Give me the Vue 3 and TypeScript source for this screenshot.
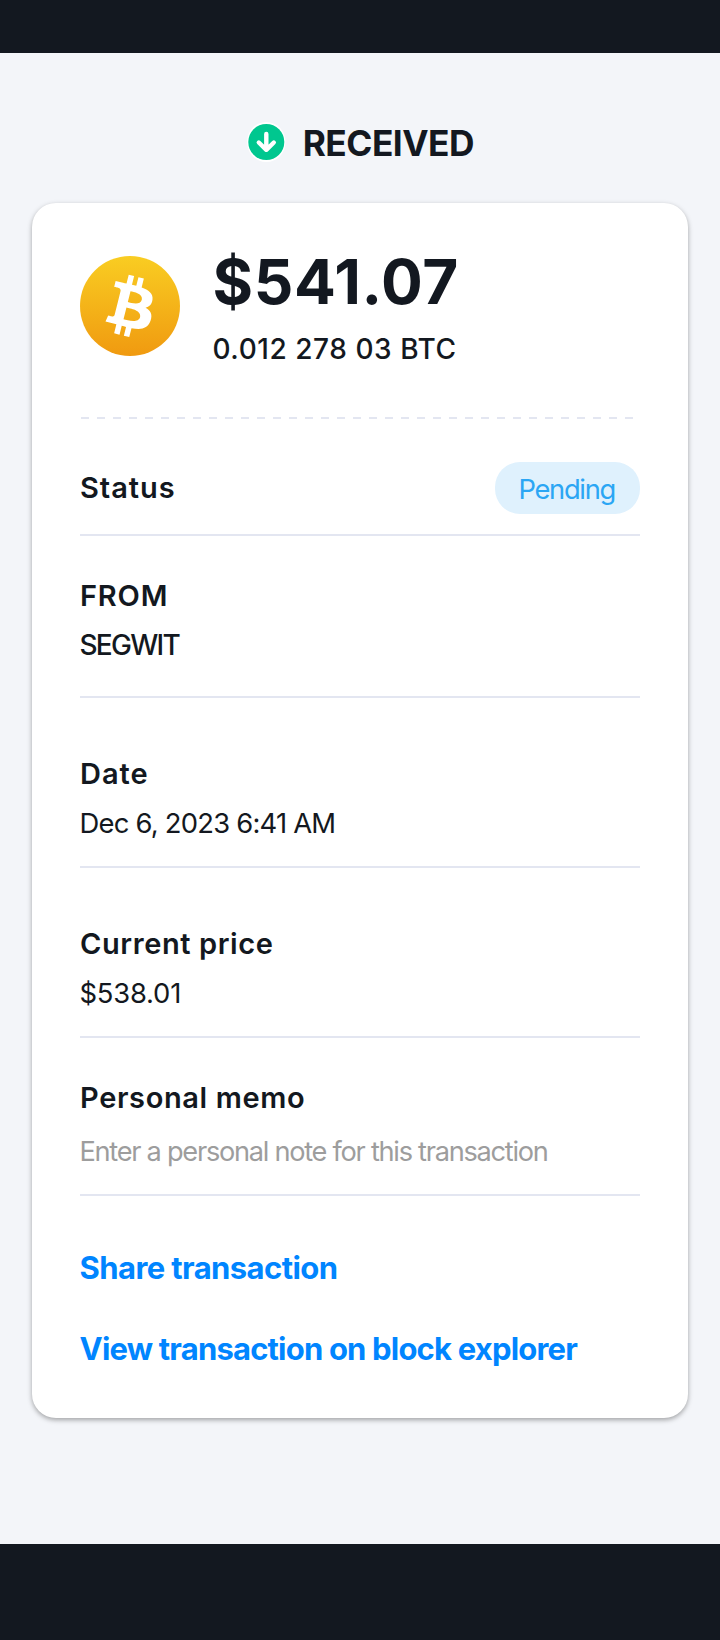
<script setup lang="ts">
interface Detail {
  key: string
  label: string
  value: string
}

const details: Detail[] = [
  { key: 'from', label: 'FROM', value: 'SEGWIT' },
  { key: 'date', label: 'Date', value: 'Dec 6, 2023 6:41 AM' },
  { key: 'price', label: 'Current price', value: '$538.01' },
  { key: 'memo', label: 'Personal memo', value: 'Enter a personal note for this transaction' },
]
</script>

<template>
  <div class="screen">
    <div class="bar-top"></div>
    <main class="content">
      <header class="heading">
        <svg class="heading-icon" width="40" height="42" viewBox="0 0 40 42">
          <ellipse cx="20.3" cy="21" rx="19.2" ry="20" fill="#fff" />
          <circle cx="20.3" cy="21" r="18" fill="#00c78f" />
          <path d="M20.300 13v15M12.800 21.500 20.300 28.800l7.500-7.300" fill="none" stroke="#fff" stroke-width="4.4" stroke-linecap="round" stroke-linejoin="round" />
        </svg>
        <h1 class="heading-text">RECEIVED</h1>
      </header>

      <section class="card">
        <div class="summary">
          <svg class="coin" width="100" height="100" viewBox="0 0 32 32">
            <defs>
              <linearGradient id="coin-fill" x1="0" y1="0" x2="0" y2="1">
                <stop offset="0" stop-color="#f9cd22" />
                <stop offset="1" stop-color="#f09a10" />
              </linearGradient>
            </defs>
            <circle cx="16" cy="16" r="16" fill="url(#coin-fill)" />
            <path fill="#fff" d="M23.189 14.020c.314-2.096-1.283-3.223-3.465-3.975l.708-2.840-1.728-.430-.690 2.765c-.454-.114-.920-.220-1.385-.326l.695-2.783L15.596 6l-.708 2.839c-.376-.086-.746-.170-1.104-.260l.002-.009-2.384-.595-.460 1.846s1.283.294 1.256.312c.700.175.826.638.805 1.006l-.806 3.235c.048.012.110.030.180.057l-.183-.045-1.130 4.532c-.086.212-.303.531-.793.410.018.025-1.256-.313-1.256-.313l-.858 1.978 2.250.561c.418.105.828.215 1.231.318l-.715 2.872 1.727.430.708-2.840c.472.127.930.245 1.378.357l-.706 2.828 1.728.430.715-2.866c2.948.558 5.164.333 6.097-2.333.752-2.146-.037-3.385-1.588-4.192 1.130-.260 1.980-1.003 2.207-2.538zm-3.950 5.538c-.533 2.147-4.148.986-5.320.695l.950-3.805c1.172.293 4.929.872 4.370 3.110zm.535-5.569c-.487 1.953-3.495.960-4.470.717l.860-3.450c.975.243 4.118.696 3.610 2.733z" />
          </svg>
          <div class="amounts">
            <div class="fiat">$541.07</div>
            <div class="crypto">0.012 278 03 BTC</div>
          </div>
        </div>
        <div class="dashes"></div>

        <div class="row status">
          <span class="label">Status</span>
          <span class="pill">Pending</span>
        </div>

        <div v-for="d in details" :key="d.key" class="row" :class="d.key">
          <div class="label">{{ d.label }}</div>
          <div class="value">{{ d.value }}</div>
        </div>

        <nav class="links">
          <a class="link share">Share transaction</a>
          <a class="link explorer">View transaction on block explorer</a>
        </nav>
      </section>
    </main>
    <div class="bar-bottom"></div>
  </div>
</template>

<style>
body {
  margin: 0;
}
</style>

<style scoped>
.screen {
  display: flex;
  flex-direction: column;
  width: 720px;
  height: 1640px;
  background: #f3f5f9;
  color: #131820;
  font-family: Inter, "Liberation Sans", sans-serif;
}
.screen * {
  box-sizing: border-box;
}
.bar-top {
  height: 53px;
  background: #131820;
}
.bar-bottom {
  height: 96px;
  background: #131820;
}
.content {
  flex: 1;
  padding: 0 32px;
}
.heading {
  display: flex;
  height: 150px;
  padding: 68px 0 0 214.400px;
}
.heading-icon {
  flex: none;
}
.heading-text {
  margin: 1px 0 0 16.300px;
  font-size: 35.300px;
  line-height: 44px;
  font-weight: 700;
  letter-spacing: -0.500px;
}
.card {
  height: 1215px;
  padding: 0 48px;
  border-radius: 24px;
  background: #fff;
  box-shadow: 0 2px 5px rgba(0, 0, 0, 0.34);
}
.summary {
  display: flex;
  height: 214px;
  padding-top: 53px;
}
.coin {
  flex: none;
}
.amounts {
  margin-left: 32.500px;
}
.fiat {
  margin-top: -9px;
  font-size: 62px;
  line-height: 70px;
  font-weight: 700;
  letter-spacing: 0.620px;
}
.crypto {
  margin-top: 14px;
  font-size: 28px;
  line-height: 36px;
  font-weight: 500;
  letter-spacing: 0.550px;
}
.dashes {
  height: 2px;
  margin: 0 7px 0 1px;
  background: repeating-linear-gradient(90deg, #e3e6f1 0 8px, transparent 8px 16px);
}
.row {
  height: 170px;
  padding-top: 58px;
  border-bottom: 2px solid #e3e6f1;
}
.label {
  font-size: 29px;
  line-height: 36px;
  font-weight: 600;
  white-space: nowrap;
}
.value {
  margin: 13px 0 0 -0.500px;
  font-size: 27.400px;
  line-height: 36px;
  font-weight: 400;
  white-space: nowrap;
}
.status {
  display: flex;
  justify-content: space-between;
  height: 117px;
  padding-top: 43px;
}
.status .label {
  margin-top: 8px;
  letter-spacing: 0.980px;
}
.pill {
  width: 145px;
  height: 52px;
  padding-left: 23.500px;
  border-radius: 25px;
  background: #dff1fd;
  color: #2ba6f4;
  font-size: 27.300px;
  line-height: 56px;
  font-weight: 400;
  letter-spacing: -1.300px;
}
.from {
  height: 162px;
  padding-top: 42px;
}
.from .label {
  letter-spacing: 0.800px;
}
.from .value {
  font-size: 28px;
  font-weight: 500;
  letter-spacing: -1.720px;
}
.date .label {
  letter-spacing: 1px;
}
.date .value {
  letter-spacing: -0.780px;
}
.price .label {
  letter-spacing: 0.600px;
}
.price .value {
  letter-spacing: -0.220px;
}
.memo {
  height: 158px;
  padding-top: 42px;
}
.memo .label {
  letter-spacing: 0.640px;
}
.memo .value {
  margin-top: 18px;
  color: #9d9d9d;
  font-size: 27.200px;
  letter-spacing: -1.275px;
}
.links {
  display: flex;
  flex-direction: column;
  gap: 45px;
  padding-top: 54px;
}
.link {
  margin-left: -0.400px;
  color: #0085ff;
  font-size: 31px;
  line-height: 36px;
  font-weight: 700;
  white-space: nowrap;
}
.share {
  letter-spacing: -0.590px;
}
.explorer {
  letter-spacing: -0.815px;
}
</style>
